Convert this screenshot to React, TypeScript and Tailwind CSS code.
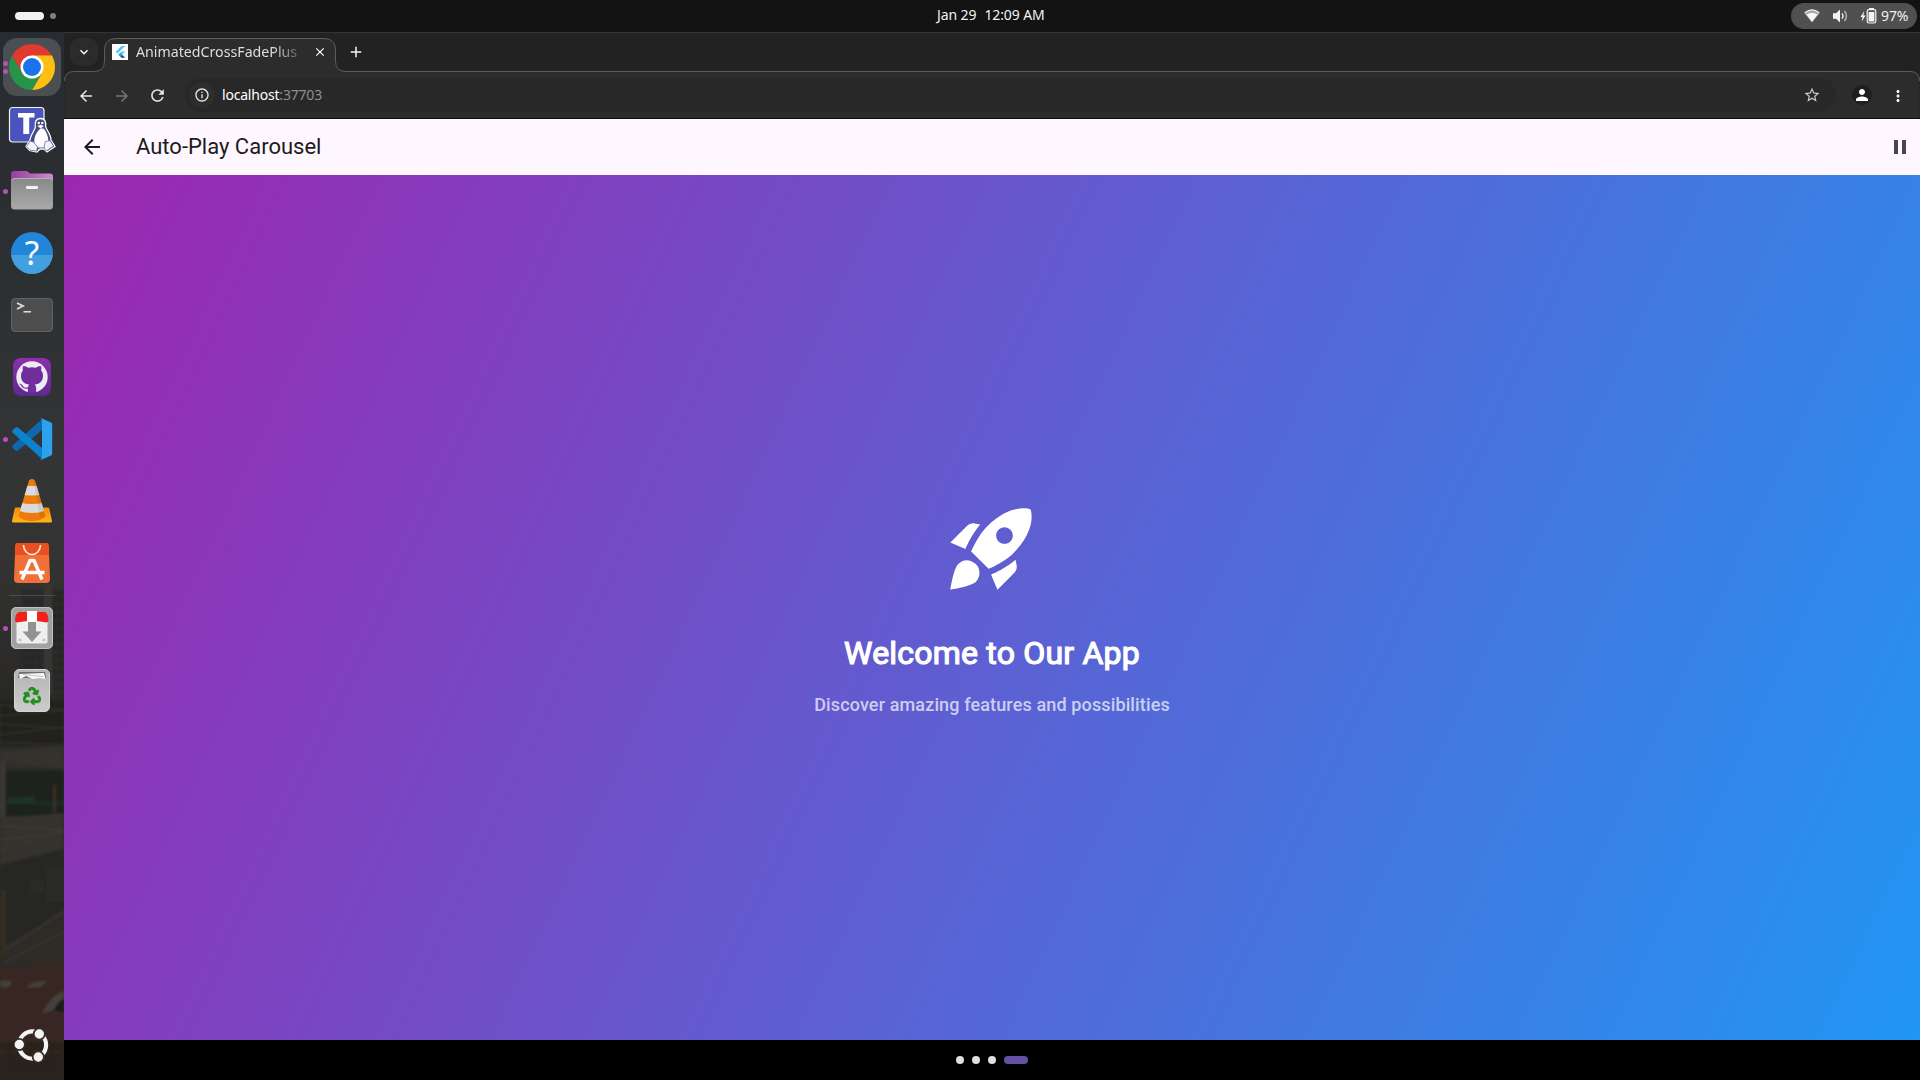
import React from "react";
import { MdRocketLaunch, MdPause, MdArrowBack, MdArrowForward, MdRefresh, MdInfoOutline, MdStarBorder, MdPerson, MdMoreVert, MdClose, MdAdd, MdExpandMore } from "react-icons/md";
import { FaRecycle } from "react-icons/fa";

const UI = "font-['Noto_Sans','Open_Sans',sans-serif]";

function TopBar() {
  return (
    <header className={`flex h-8 shrink-0 items-center bg-[#131313] text-[#f2f2f2] ${UI}`}>
      <div className="flex w-[937px] items-center gap-1.5 pl-[15px]">
        <span className="h-2 w-[29px] rounded-full bg-[#f2f2f2]" />
        <span className="size-1.5 rounded-full bg-[#808080]" />
      </div>
      <div className="flex gap-[8px] pb-0.5 text-[14px] leading-[30px] tracking-[-0.1px] whitespace-pre">
        <span>Jan 29</span>
        <span>12:09 AM</span>
      </div>
      <div className="flex flex-1 justify-end pr-[3px]">
        <div className="flex h-[26px] w-[126px] items-center rounded-full bg-[#505050] pl-[13px]">
          <svg width="16" height="14" viewBox="0 0 16 14">
            <path d="M.3 4.2Q8-2.5 15.7 4.2L8 13.2Z" fill="#a6a6a6" />
            <path d="M2.5 5.6Q8 1.8 13.5 5.6L8 13Z" fill="#f7f7f7" />
            <path d="M.8 3.8Q8-2 15.2 3.8" fill="none" stroke="#eee" strokeWidth="1.1" />
          </svg>
          <svg className="ml-[13px]" width="16" height="14" viewBox="0 0 16 14">
            <path d="M0 4.3h3L7 .5v13L3 9.7H0z" fill="#f5f5f5" />
            <path d="M9 4.3q2.2 2.7 0 5.4" fill="none" stroke="#eee" strokeWidth="1.3" />
            <path d="M11.5 2q4 5 0 10" fill="none" stroke="#bbb" strokeWidth="1.3" />
          </svg>
          <svg className="ml-[11px]" width="17" height="16" viewBox="0 0 17 16">
            <path d="M4.2 3 .5 9h2l-.8 4.5L5.6 7.4H3.4z" fill="#f5f5f5" />
            <rect x="7.2" y="1.700" width="8.600" height="13.300" rx="1.800" fill="none" stroke="#f5f5f5" strokeWidth="1.200" />
            <path d="M9 0h5v1.600H9zM8.600 4.100h5.800v9.400H8.600z" fill="#f5f5f5" />
          </svg>
          <span className="ml-1 text-[14px] leading-none tracking-[-0.1px]">97%</span>
        </div>
      </div>
    </header>
  );
}

function ChromeIcon() {
  return (
    <svg width="46" height="46" viewBox="0 0 46 46">
      <path d="M23 23 3.1 11.5A23 23 0 0 1 42.9 11.5Z" fill="#e0392d" />
      <path d="M23 23 42.9 11.5A23 23 0 0 1 23 46L33 28.7Z" fill="#fdc012" />
      <path d="M23 11.5H42.9L33 30 23 23Z" fill="#fdc012" />
      <path d="M33 28.7 23 46A23 23 0 0 1 3.1 11.5L13 28.7Q23 38 33 28.7Z" fill="#279547" />
      <path d="M3.1 11.5 13 28.7 23 11.5Z" fill="#e0392d" />
      <circle cx="23" cy="23" r="11.5" fill="#fff" />
      <circle cx="23" cy="23" r="9" fill="#1a73e8" />
    </svg>
  );
}

function TeamsIcon() {
  return (
    <svg width="48" height="48" viewBox="0 0 48 48">
      <rect x="1.5" y="2.5" width="34.500" height="34.500" rx="3" fill="#4b53bc" stroke="#f3f3fb" strokeWidth="1.200" />
      <path d="M10 8h16.500v4.500h-5.300V29h-5.900V12.500H10z" fill="#fff" />
      <path d="M32.500 13.500c-5 0-5.600 4-5.200 8.500-.2 3-4.800 8-5.300 13l-4 6.500 3.500 4 7.500 1.500 3-3h4l3 3 8-5.500-4-6.500c0-6-5-10.500-5.300-13.500.3-5-.7-8-5.200-8z" fill="#444b80" stroke="#fff" strokeWidth="1.300" />
      <path d="M32.500 23.500c-2.500 2-7.500 8-6 15.500l3.500 3.500h6l4-4c1.500-6-2.500-13-4.500-15z" fill="#fff" />
      <path d="m22 36-3.500 5.500 3 3.500 7 1.200 1.200-4-4-5.200zM42 35.500l3.500 5.500-7 5-2.500-3 1.200-6.500z" fill="#f2f2fa" stroke="#444b80" strokeWidth=".6" />
      <path d="m29.300 21 3.300-1.300 3.300 1.300-3.300 2.500z" fill="#fff" />
      <circle cx="30.800" cy="18" r="1.200" fill="#fff" />
      <circle cx="34.300" cy="18" r="1.200" fill="#fff" />
    </svg>
  );
}

function FilesIcon() {
  return (
    <svg width="44" height="44" viewBox="0 0 44 44">
      <defs>
        <linearGradient id="folder" x2="1"><stop stopColor="#963c98" /><stop offset="1" stopColor="#d08bce" /></linearGradient>
        <linearGradient id="drawer" x2="0" y2="1"><stop stopColor="#898989" /><stop offset="1" stopColor="#a9a9a9" /></linearGradient>
      </defs>
      <path d="M1 5Q1 2 4 2h12q2 0 4 2.500h20q3 0 3 3V20H1z" fill="url(#folder)" />
      <rect x="1" y="9.500" width="42" height="31" rx="3.500" fill="url(#drawer)" />
      <path d="M1.500 12q0-2.500 3-2.500h35q3 0 3 2.500" fill="none" stroke="#b4b4b4" />
      <rect x="16" y="17" width="12" height="3" rx="1" fill="#f4f4f4" />
    </svg>
  );
}

function HelpIcon() {
  return (
    <div className="flex size-[42px] items-center justify-center rounded-full bg-linear-to-b from-[#2186d8] from-55% to-[#42a0e0] to-55% pb-0.5">
      <span className="font-['Noto_Sans',sans-serif] text-[33px] leading-none text-white">?</span>
    </div>
  );
}

function TerminalIcon() {
  return (
    <svg width="42" height="34" viewBox="0 0 42 34">
      <rect x=".5" y=".5" width="41" height="33" rx="3.500" fill="#4d4d4d" stroke="#626262" />
      <path d="m6 5 6 3-6 3" fill="none" stroke="#dedede" strokeWidth="1.800" />
      <path d="M12.500 13.800H20" stroke="#eee" strokeWidth="1.400" />
    </svg>
  );
}

function GithubIcon() {
  return (
    <svg width="38" height="38" viewBox="0 0 38 38">
      <defs><linearGradient id="gh" x2="0" y2="1"><stop stopColor="#8f2fae" /><stop offset="1" stopColor="#5b2a8e" /></linearGradient></defs>
      <rect width="38" height="38" rx="8" fill="url(#gh)" />
      <circle cx="19" cy="19" r="15.700" fill="#ececf2" />
      <path d="M14.800 35v-4.500c-5 1-6-2.200-7.300-3.700l-1.500-.9c2.800-.5 3.600 1.800 4.800 3 1.300 1.100 3 .8 4.200.3.200-1.200.7-2.100 1.300-2.600-5-.7-8.300-2.900-8.300-9 0-2.200.7-3.900 1.900-5.200-.4-1.500-.3-3.200.3-4.400 1.500-.1 3.400.7 4.900 1.800a18 18 0 0 1 7.800 0c1.500-1.100 3.400-1.900 4.900-1.800.6 1.200.7 2.900.3 4.400 1.200 1.300 1.900 3 1.900 5.200 0 6.100-3.300 8.300-8.300 9 .8.700 1.500 2 1.500 4V35z" fill="#712d9c" />
    </svg>
  );
}

function VsCodeIcon() {
  return (
    <svg width="42" height="42" viewBox="0 0 42 42">
      <path d="M31 1 1.800 27.300Q.5 28.600 1.800 30l2.700 2.500q1.200 1 2.500 0L31 12z" fill="#0f68ad" />
      <path d="M31 41 1.800 14.700Q.5 13.400 1.800 12l2.700-2.500q1.200-1 2.500 0L31 30z" fill="#0b82cd" />
      <path d="M29 .8q1-.6 2-.2l9 4q1.200.6 1.200 2v28.800q0 1.400-1.200 2l-9 4q-1 .4-2-.2l2-.9V1.500z" fill="#2aa2ee" />
    </svg>
  );
}

function VlcIcon() {
  return (
    <svg width="42" height="46" viewBox="0 0 42 46">
      <defs>
        <linearGradient id="base" x2="0" y2="1"><stop stopColor="#f58a0a" /><stop offset="1" stopColor="#ffb51a" /></linearGradient>
        <clipPath id="cone"><path d="M18 2.500Q18.500 1 21 1t3 1.500L34.500 38Q31 43 21 43T7.500 38z" /></clipPath>
      </defs>
      <path d="M5 29.500h32q1 0 1.300 1L41 43q0 1.500-1.500 1.500H2.500Q1 44.500 1 43L3.700 30.500q.3-1 1.300-1z" fill="url(#base)" />
      <g clipPath="url(#cone)">
        <path d="M6 0h30v41q-15 6-30 0z" fill="#ee7c0d" />
        <path d="M6 7q15 2 30 0v9q-15 3-30 0zM6 24q15 4 30 0v8q-15 6-30 0z" fill="#d9dadc" />
        <path d="M22 0h14v40H29z" fill="#000" opacity=".08" />
      </g>
    </svg>
  );
}

function AppCenterIcon() {
  return (
    <svg width="36" height="42" viewBox="0 0 36 42">
      <path d="M4 1h28q2.500 0 2.700 2.500L36 37q0 4-4 4H4q-4 0-4-4L1.300 3.500Q1.500 1 4 1z" fill="#f17037" />
      <path d="M4 1h28q2.500 0 2.700 2.500L35 13H1L1.300 3.500Q1.500 1 4 1z" fill="#e9501f" />
      <path d="M9.500 3a8.500 9.500 0 0 0 17 0" fill="none" stroke="#f7e9e3" strokeWidth="1.600" />
      <path d="M8 37.500 16 18.500h4L28 37.500M5.500 30.500h25" fill="none" stroke="#fff" strokeWidth="3.400" strokeLinejoin="round" />
    </svg>
  );
}

function DownloadIcon() {
  return (
    <svg width="44" height="44" viewBox="0 0 44 44">
      <rect x="1" y="1" width="42" height="42" rx="5" fill="#a1a1a1" />
      <rect x="1.500" y="1.500" width="41" height="41" rx="5" fill="none" stroke="#c2c2c2" />
      <rect x="6.500" y="9" width="31" height="28.500" rx="2" fill="#efefed" />
      <path d="M9 6h26q3.500 2 3.500 8 0 3-3.500 2.300-13-3-26.500 0Q5 17 5 14q0-6 4-8z" fill="#f1201d" />
      <path d="M17 5h10v11H17z" fill="#fff" />
      <path d="M18 16h8v9.500h5.500L22 36l-9.500-10.500H18z" fill="#929292" />
      <circle cx="10" cy="34" r="1.600" fill="#c9c9ba" /><circle cx="34" cy="34" r="1.600" fill="#c9c9ba" />
    </svg>
  );
}

function TrashIcon() {
  return (
    <div className="relative flex h-[43px] w-[36px] items-end justify-center rounded-[5px] border border-[#d4d4d4] bg-linear-to-b from-[#b4b4b4] to-[#cbcbcb] pb-1.5">
      <svg className="absolute top-0.5 left-[3px]" width="28" height="8" viewBox="0 0 28 8">
        <path d="M1 0h26l1 6H0z" fill="#707070" />
        <path d="m1 2 25-1 1.500 6L22 6 15 7 8 4 2 7z" fill="#fafafa" />
        <path d="m5 2.500 20 2" stroke="#aaa" strokeWidth=".7" />
      </svg>
      <FaRecycle className="size-[18px] text-[#1d8f1d]" stroke="#1d8f1d" strokeWidth="24" />
    </div>
  );
}

function UbuntuIcon() {
  return (
    <svg width="36" height="36" viewBox="0 0 36 36">
      <circle cx="18.500" cy="18" r="13.600" fill="none" stroke="#f4f4f4" strokeWidth="4.200" />
      {[[5.300, 17.500], [25.300, 7], [24.300, 30]].map(([x, y]) => (
        <circle key={x} cx={x} cy={y} r="5.600" fill="#f4f4f4" stroke="#352c26" strokeWidth="1.800" />
      ))}
    </svg>
  );
}

function Wallpaper() {
  return (
    <svg className="absolute inset-0" width="64" height="1048" viewBox="0 32 64 1048">
      <defs>
        <linearGradient id="sky" x2="0" y2="1">
          <stop stopColor="#272c30" /><stop offset=".25" stopColor="#2d3033" /><stop offset=".4" stopColor="#333435" />
          <stop offset=".5" stopColor="#333333" /><stop offset=".54" stopColor="#30302f" /><stop offset=".64" stopColor="#292827" />
          <stop offset=".7" stopColor="#302e2b" /><stop offset=".82" stopColor="#2d2c28" /><stop offset="1" stopColor="#30261f" />
        </linearGradient>
        <filter id="soft"><feGaussianBlur stdDeviation=".8" /></filter>
      </defs>
      <rect y="32" width="64" height="1048" fill="url(#sky)" />
      <g filter="url(#soft)">
        <path d="M22 590h42v107H22z" fill="#2c2b29" />
        <path d="M44 584h8v110h-8z" fill="#373533" />
        <path d="M26 600v90M31 600v90M39 600v90M55 590v105M60 590v105" stroke="#23221f" strokeWidth="2" strokeDasharray="4 4" />
        <path d="M0 700h64v46H0z" fill="#24221f" />
        <path d="m0 705 64 5M0 716l64-6M0 724l64 4M0 735l64-8M0 742l64 3" stroke="#37332e" />
        <path d="M0 752 64 746v22L0 762z" fill="#34322f" />
        <path d="M6 770h58v46H6z" fill="#1f201e" />
        <path d="M0 760h5v58H0z" fill="#3b3934" />
        <path d="m7 798 28-2v8H7z" fill="#1e3329" /><path d="M34 801h30v5H34z" fill="#1c2b25" />
        <path d="M53 785h3v27h-3z" fill="#3d2d22" />
        <path d="m0 818 64-5v35L0 865z" fill="#34322e" />
        <path d="m0 826 64 4M0 840l64-8M0 852l64-22" stroke="#3e3b35" />
        <path d="m0 865 64-15v58L0 950z" fill="#272624" />
        <path d="M46 868h18v34H46zM30 880h14v12H30z" fill="#2b2a27" />
        <path d="M1 890h5v65H1z" fill="#352d24" />
        <path d="m5 950 59-38M5 962l59-30" stroke="#373632" strokeWidth="1.500" />
        <path d="M0 970 64 962v80H0z" fill="#382820" />
        <path d="M0 981h12l-3 6H0zM27 988q3-8 20-7l-6 6zM42 1014q8-18 22-23v15z" fill="#45413b" />
        <path d="M54 1010q4-10 10-11v14z" fill="#1e1f1b" />
        <path d="M0 1042h64v38H0z" fill="#2b231d" />
        <path d="M0 1052h64" stroke="#352b23" strokeWidth="3" strokeDasharray="6 5" />
      </g>
    </svg>
  );
}

function DockItem({ dots = 0, active = false, children }: { dots?: number; active?: boolean; children: React.ReactNode }) {
  return (
    <div className="relative flex h-[62px] w-16 shrink-0 items-center justify-center">
      {active && <span className="absolute top-0.5 left-[3px] size-[58px] rounded-[14px] bg-[#4c4f52]" />}
      {dots > 0 && (
        <span className="absolute top-0 left-[3px] flex h-full flex-col justify-center gap-[3px]">
          <i className="size-[5px] rounded-full bg-[#b650b5]" />
          {dots > 1 && <i className="size-[5px] rounded-full bg-[#b650b5]" />}
        </span>
      )}
      <span className="relative">{children}</span>
    </div>
  );
}

function Dock() {
  return (
    <aside className="relative w-16 shrink-0 overflow-hidden">
      <Wallpaper />
      <div className="relative flex h-full flex-col items-center pt-1">
        <DockItem dots={2} active><ChromeIcon /></DockItem>
        <DockItem><TeamsIcon /></DockItem>
        <DockItem dots={1}><FilesIcon /></DockItem>
        <DockItem><HelpIcon /></DockItem>
        <DockItem><TerminalIcon /></DockItem>
        <DockItem><GithubIcon /></DockItem>
        <DockItem dots={1}><VsCodeIcon /></DockItem>
        <DockItem><VlcIcon /></DockItem>
        <DockItem><AppCenterIcon /></DockItem>
        <div className="mt-px mb-px h-px w-[46px] shrink-0 bg-[#4a4a4a]" />
        <DockItem dots={1}><DownloadIcon /></DockItem>
        <DockItem><TrashIcon /></DockItem>
        <div className="mt-auto pb-[17px]"><UbuntuIcon /></div>
      </div>
    </aside>
  );
}

function BrowserChrome() {
  return (
    <div className={`relative h-[87px] shrink-0 bg-[#222222] ${UI}`}>
      <svg className="absolute inset-0" width="1856" height="87" viewBox="0 0 1856 87">
        <path d="M0 .5H1856" stroke="#343434" />
        <path d="M.5 49Q.5 39.500 10 39.500H30Q40.500 39.500 40.500 29V18Q40.500 6.500 52 6.500H260Q271.500 6.500 271.500 18V29Q271.500 39.500 282 39.500H1846Q1855.500 39.500 1855.500 49V87H.5z" fill="#2c2c2c" />
        <path d="M.5 49Q.5 39.500 10 39.500H30Q40.500 39.500 40.500 29V18Q40.500 6.500 52 6.500H260Q271.500 6.500 271.500 18V29Q271.500 39.500 282 39.500H1846Q1855.500 39.500 1855.500 49" fill="none" stroke="#5c5c5c" />
        <path d="M0 86.500H1856" stroke="#101010" />
      </svg>
      <div className="relative flex h-10 items-center">
        <div className="ml-1.5 flex size-7 items-center justify-center rounded-[10px] bg-[#2b2b2b]">
          <MdExpandMore className="size-4 text-white" />
        </div>
        <div className="ml-3.5 size-4 bg-white">
          <svg width="16" height="16" viewBox="0 0 16 16">
            <path d="M9.500 2h3.700L5.500 9.500 3.700 7.700z" fill="#54c5f8" />
            <path d="M9.500 7.500h3.700L10 10.700 8.200 9z" fill="#54c5f8" />
            <path d="m8.200 8.800 2 2-2 1.800-1.900-1.900z" fill="#13a0e8" />
            <path d="m8.200 12.600 2-1.900 3 3.100H9.500z" fill="#01579b" />
          </svg>
        </div>
        <div className="ml-2 w-[171px] pb-px text-[14.2px] leading-5 whitespace-nowrap text-[#dedede] [mask-image:linear-gradient(to_right,#000_136px,transparent_172px)]">
          AnimatedCrossFadePlus
        </div>
        <MdClose className="ml-1.5 size-3.5 text-white" />
        <MdAdd className="ml-5 size-4.5 text-[#f5f5f5]" />
      </div>
      <div className="relative flex h-[46px] items-center text-[#e8e8e8] [&>svg]:mt-px">
        <MdArrowBack className="ml-[13px] size-4.5" />
        <MdArrowForward className="ml-[18px] size-4.5 text-[#777777]" />
        <MdRefresh className="ml-[17px] size-[19px]" />
        <div className="ml-[18px] flex h-[34px] flex-1 items-center rounded-full bg-[#282828] pl-1">
          <span className="flex size-[26px] items-center justify-center rounded-full bg-[#2d2d2d]"><MdInfoOutline className="size-4" /></span>
          <span className="ml-[7px] pb-px text-[14px] leading-5 tracking-[-0.2px] text-white">localhost<span className="text-[#8e8e8e]">:37703</span></span>
          <MdStarBorder className="mr-[15px] ml-auto size-4.5 text-[#c9c9c9]" />
        </div>
        <span className="ml-4 flex size-5 items-center justify-center rounded-full bg-[#1e2020]"><MdPerson className="size-4.5 text-white" /></span>
        <MdMoreVert className="mr-[13px] ml-[17px] size-4.5 text-white" />
      </div>
    </div>
  );
}

function CarouselPage() {
  return (
    <main className="flex flex-1 flex-col bg-black font-['Roboto',sans-serif]">
      <div className="flex h-14 shrink-0 items-center bg-[#fef7ff] px-4">
        <MdArrowBack className="size-6 text-[#1d1b20]" />
        <h1 className="ml-8 text-[22px] leading-7 text-[#1d1b20]">Auto-Play Carousel</h1>
        <MdPause className="-mr-2 ml-auto size-6 text-[#49454f]" />
      </div>
      <section className="flex h-[865px] shrink-0 flex-col items-center bg-[linear-gradient(115deg,#9c27b0,#2196f3)] pt-[323px]">
        <MdRocketLaunch className="size-[100px] text-white" />
        <h2 className="mt-8 text-[32px] leading-[46px] tracking-[0.2px] text-white [-webkit-text-stroke:1.2px_white]">Welcome to Our App</h2>
        <p className="mt-4 text-[18px] leading-[26px] font-medium tracking-[0.13px] text-white/70">Discover amazing features and possibilities</p>
      </section>
      <div className="flex h-10 items-center justify-center gap-2">
        <span className="size-2 rounded-full bg-[#e0e0e0]" />
        <span className="size-2 rounded-full bg-[#e0e0e0]" />
        <span className="size-2 rounded-full bg-[#e0e0e0]" />
        <span className="h-2 w-6 rounded-full bg-[#6750a4]" />
      </div>
    </main>
  );
}

export default function App() {
  return (
    <div className="flex h-[1080px] w-[1920px] flex-col overflow-hidden bg-black">
      <TopBar />
      <div className="flex min-h-0 flex-1">
        <Dock />
        <div className="flex min-w-0 flex-1 flex-col">
          <BrowserChrome />
          <CarouselPage />
        </div>
      </div>
    </div>
  );
}
